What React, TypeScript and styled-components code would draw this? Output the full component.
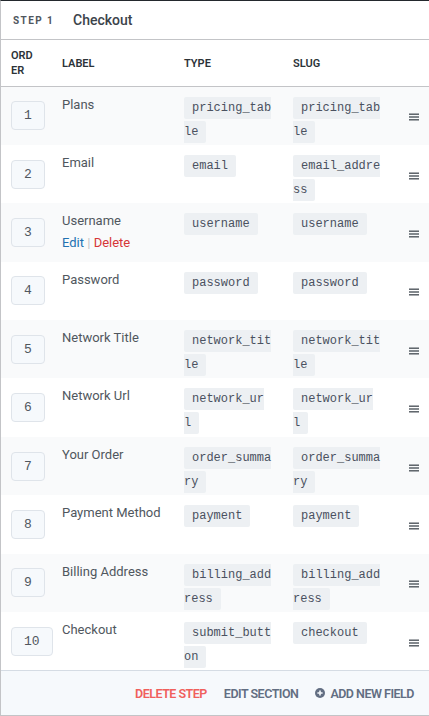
import styled, { createGlobalStyle } from 'styled-components'

const GlobalStyle = createGlobalStyle`
  body {
    margin: 0;
    background: #fff;
    font-family: Roboto, "Noto Sans", Arial, sans-serif;
  }
`

const Panel = styled.div`
  box-sizing: border-box;
  width: 429px;
  height: 716px;
  display: flex;
  flex-direction: column;
  background: #fff;
  border-top: 1px solid #23282d;
  border-left: 1px solid #c3c4c7;
  border-bottom: 1px solid #c3c4c7;
`

const StepHeader = styled.div`
  display: flex;
  align-items: center;
  height: 38px;
  padding-left: 12px;
  border-bottom: 1px solid #c3c4c7;
`

const StepTag = styled.span`
  width: 60px;
  font-size: 10px;
  font-weight: 700;
  letter-spacing: 1.4px;
  text-transform: uppercase;
  color: #50575e;
`

const StepTitle = styled.h3`
  margin: 0;
  font-size: 14px;
  font-weight: 500;
  color: #3c434a;
`

const FieldTable = styled.table`
  width: 100%;
  border-collapse: collapse;
  table-layout: fixed;
`

const Col = styled.col<{ $w?: number }>`
  width: ${(p) => (p.$w ? `${p.$w}px` : 'auto')};
`

const HeadCell = styled.th<{ $first?: boolean }>`
  height: 46px;
  padding: 0 ${(p) => (p.$first ? 14 : 10)}px 0 ${(p) => (p.$first ? 10 : 11)}px;
  border-bottom: 1px solid #c3c4c7;
  text-align: left;
  vertical-align: middle;
  font-size: 11px;
  font-weight: 600;
  line-height: 15px;
  text-transform: uppercase;
  color: #2c3338;
  word-break: break-all;
`

const Row = styled.tr<{ $striped: boolean }>`
  height: 58.4px;
  background: ${(p) => (p.$striped ? '#f9fafb' : '#fff')};
`

const OrderCell = styled.td`
  padding: 0 0 0 10px;
  vertical-align: middle;
  white-space: nowrap;
`

const OrderBox = styled.span`
  display: inline-block;
  padding: 0 12px;
  line-height: 27px;
  font-family: "Liberation Mono", monospace;
  font-size: 13px;
  color: #50575e;
  background: #f6f9fc;
  border: 1px solid #dfe4ea;
  border-radius: 4px;
`

const LabelCell = styled.td`
  padding: 7px 11px 0;
  vertical-align: top;
  font-size: 13px;
  line-height: 22px;
  color: #50575e;
`

const Actions = styled.div`
  font-size: 13px;
  color: #c3c4c7;
`

const ActionLink = styled.a<{ $danger?: boolean }>`
  color: ${(p) => (p.$danger ? '#d63638' : '#2271b1')};
  text-decoration: none;
  cursor: pointer;
`

const CodeCell = styled.td`
  padding: 8px 5px 0 11px;
  vertical-align: top;
  line-height: 22px;
  word-break: break-all;
`

const Code = styled.code`
  padding: 4px 8px;
  font-family: "Liberation Mono", monospace;
  font-size: 12px;
  color: #4a5160;
  background: #edf0f3;
  border-radius: 2px;
`

const HandleCell = styled.td`
  padding: 0 0 0 18px;
  vertical-align: middle;
  color: #50575e;
  cursor: move;
`

const Footer = styled.div`
  flex: 1;
  display: flex;
  align-items: center;
  justify-content: flex-end;
  gap: 17px;
  padding-right: 15px;
  background: #f6f9fc;
  border-top: 1px solid #d5dce4;
`

const FooterButton = styled.button<{ $tone: 'danger' | 'muted' }>`
  display: inline-flex;
  align-items: center;
  gap: 5px;
  padding: 0;
  border: 0;
  background: none;
  font-family: Roboto, "Noto Sans", Arial, sans-serif;
  font-size: 12.5px;
  font-weight: 600;
  letter-spacing: -0.5px;
  text-transform: uppercase;
  color: ${(p) => (p.$tone === 'danger' ? '#f0605c' : '#626e82')};
  cursor: pointer;
`

type Field = {
  label: string
  type: string
  slug: string
  actions?: boolean
}

const fields: Field[] = [
  { label: 'Plans', type: 'pricing_table', slug: 'pricing_table' },
  { label: 'Email', type: 'email', slug: 'email_address' },
  { label: 'Username', type: 'username', slug: 'username', actions: true },
  { label: 'Password', type: 'password', slug: 'password' },
  { label: 'Network Title', type: 'network_title', slug: 'network_title' },
  { label: 'Network Url', type: 'network_url', slug: 'network_url' },
  { label: 'Your Order', type: 'order_summary', slug: 'order_summary' },
  { label: 'Payment Method', type: 'payment', slug: 'payment' },
  { label: 'Billing Address', type: 'billing_address', slug: 'billing_address' },
  { label: 'Checkout', type: 'submit_button', slug: 'checkout' },
]

const DragHandle = () => (
  <svg width="10" height="8" viewBox="0 0 10 8" fill="currentColor">
    <rect x="0" y="0.5" width="10" height="1.4" />
    <rect x="0" y="3.3" width="10" height="1.4" />
    <rect x="0" y="6.1" width="10" height="1.4" />
  </svg>
)

const PlusCircle = () => (
  <svg width="10" height="10" viewBox="0 0 10 10">
    <circle cx="5" cy="5" r="5" fill="currentColor" />
    <path d="M5 2.4v5.2M2.4 5h5.2" stroke="#f6f9fc" strokeWidth="1.6" />
  </svg>
)

export default function App() {
  return (
    <>
      <GlobalStyle />
      <Panel>
        <StepHeader>
          <StepTag>Step 1</StepTag>
          <StepTitle>Checkout</StepTitle>
        </StepHeader>
        <FieldTable>
          <colgroup>
            <Col $w={50} />
            <Col $w={122} />
            <Col $w={109} />
            <Col $w={109} />
            <Col />
          </colgroup>
          <thead>
            <tr>
              <HeadCell $first>Order</HeadCell>
              <HeadCell>Label</HeadCell>
              <HeadCell>Type</HeadCell>
              <HeadCell>Slug</HeadCell>
              <HeadCell />
            </tr>
          </thead>
          <tbody>
            {fields.map((f, i) => (
              <Row key={f.slug} $striped={i % 2 === 0}>
                <OrderCell>
                  <OrderBox>{i + 1}</OrderBox>
                </OrderCell>
                <LabelCell>
                  {f.label}
                  {f.actions && (
                    <Actions>
                      <ActionLink>Edit</ActionLink> | <ActionLink $danger>Delete</ActionLink>
                    </Actions>
                  )}
                </LabelCell>
                <CodeCell>
                  <Code>{f.type}</Code>
                </CodeCell>
                <CodeCell>
                  <Code>{f.slug}</Code>
                </CodeCell>
                <HandleCell>
                  <DragHandle />
                </HandleCell>
              </Row>
            ))}
          </tbody>
        </FieldTable>
        <Footer>
          <FooterButton $tone="danger">Delete Step</FooterButton>
          <FooterButton $tone="muted">Edit Section</FooterButton>
          <FooterButton $tone="muted">
            <PlusCircle />
            Add New Field
          </FooterButton>
        </Footer>
      </Panel>
    </>
  )
}
